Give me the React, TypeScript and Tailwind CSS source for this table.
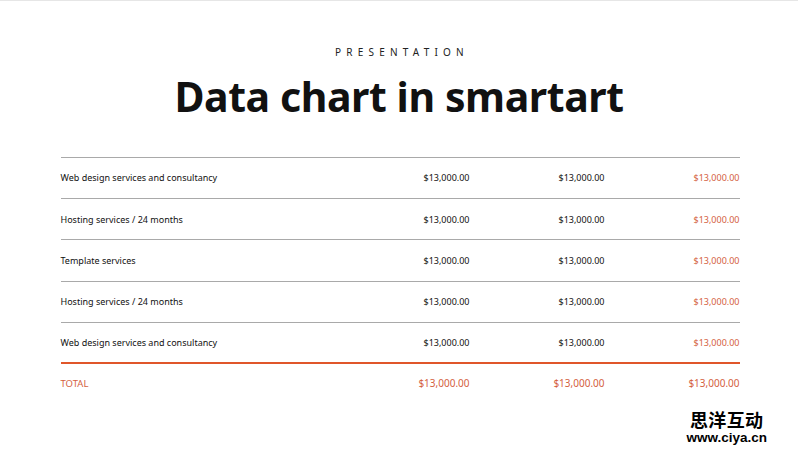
const rows = [
  "Web design services and consultancy",
  "Hosting services / 24 months",
  "Template services",
  "Hosting services / 24 months",
  "Web design services and consultancy",
];

const amount = "$13,000.00";

export default function App() {
  return (
    <div className="relative flex h-[450px] w-[798px] flex-col items-center border-t border-[#e6e6e6] bg-white font-['Noto_Sans',sans-serif] text-[#111]">
      <p className="mt-[45px] pl-[6px] text-[10px] leading-[12px] tracking-[0.52em] text-[#222]">
        PRESENTATION
      </p>
      <h1 className="mt-[14px] text-[41px] font-bold leading-[48px] tracking-[-0.01em] text-[#111]">
        Data chart in smartart
      </h1>

      <div className="ml-[2px] mt-[37px] w-[679px] border-t border-[#a9a9a9]">
        {rows.map((label, i) => (
          <div
            key={i}
            className={`grid h-[41.2px] grid-cols-[275px_134px_135px_135px] items-center text-[9px] ${
              i === rows.length - 1 ? "border-b-2 border-[#e0562a]" : "border-b border-[#a9a9a9]"
            }`}
          >
            <span>{label}</span>
            <span className="text-right">{amount}</span>
            <span className="text-right">{amount}</span>
            <span className="text-right text-[#d4613f]">{amount}</span>
          </div>
        ))}
        <div className="grid h-[40px] grid-cols-[275px_134px_135px_135px] items-center text-[#d4613f]">
          <span className="text-[9.5px]">TOTAL</span>
          <span className="text-right text-[10px]">{amount}</span>
          <span className="text-right text-[10px]">{amount}</span>
          <span className="text-right text-[10px]">{amount}</span>
        </div>
      </div>

      <div className="absolute bottom-[5px] right-[31px] flex flex-col items-center gap-[2px]">
        <span className="font-['Noto_Sans_CJK_SC',sans-serif] text-[18px] font-bold leading-[20px] tracking-[0.02em] text-black">
          思洋互动
        </span>
        <span className="font-['Liberation_Sans',sans-serif] text-[13.5px] font-bold leading-[14px] text-black">
          www.ciya.cn
        </span>
      </div>
    </div>
  );
}
